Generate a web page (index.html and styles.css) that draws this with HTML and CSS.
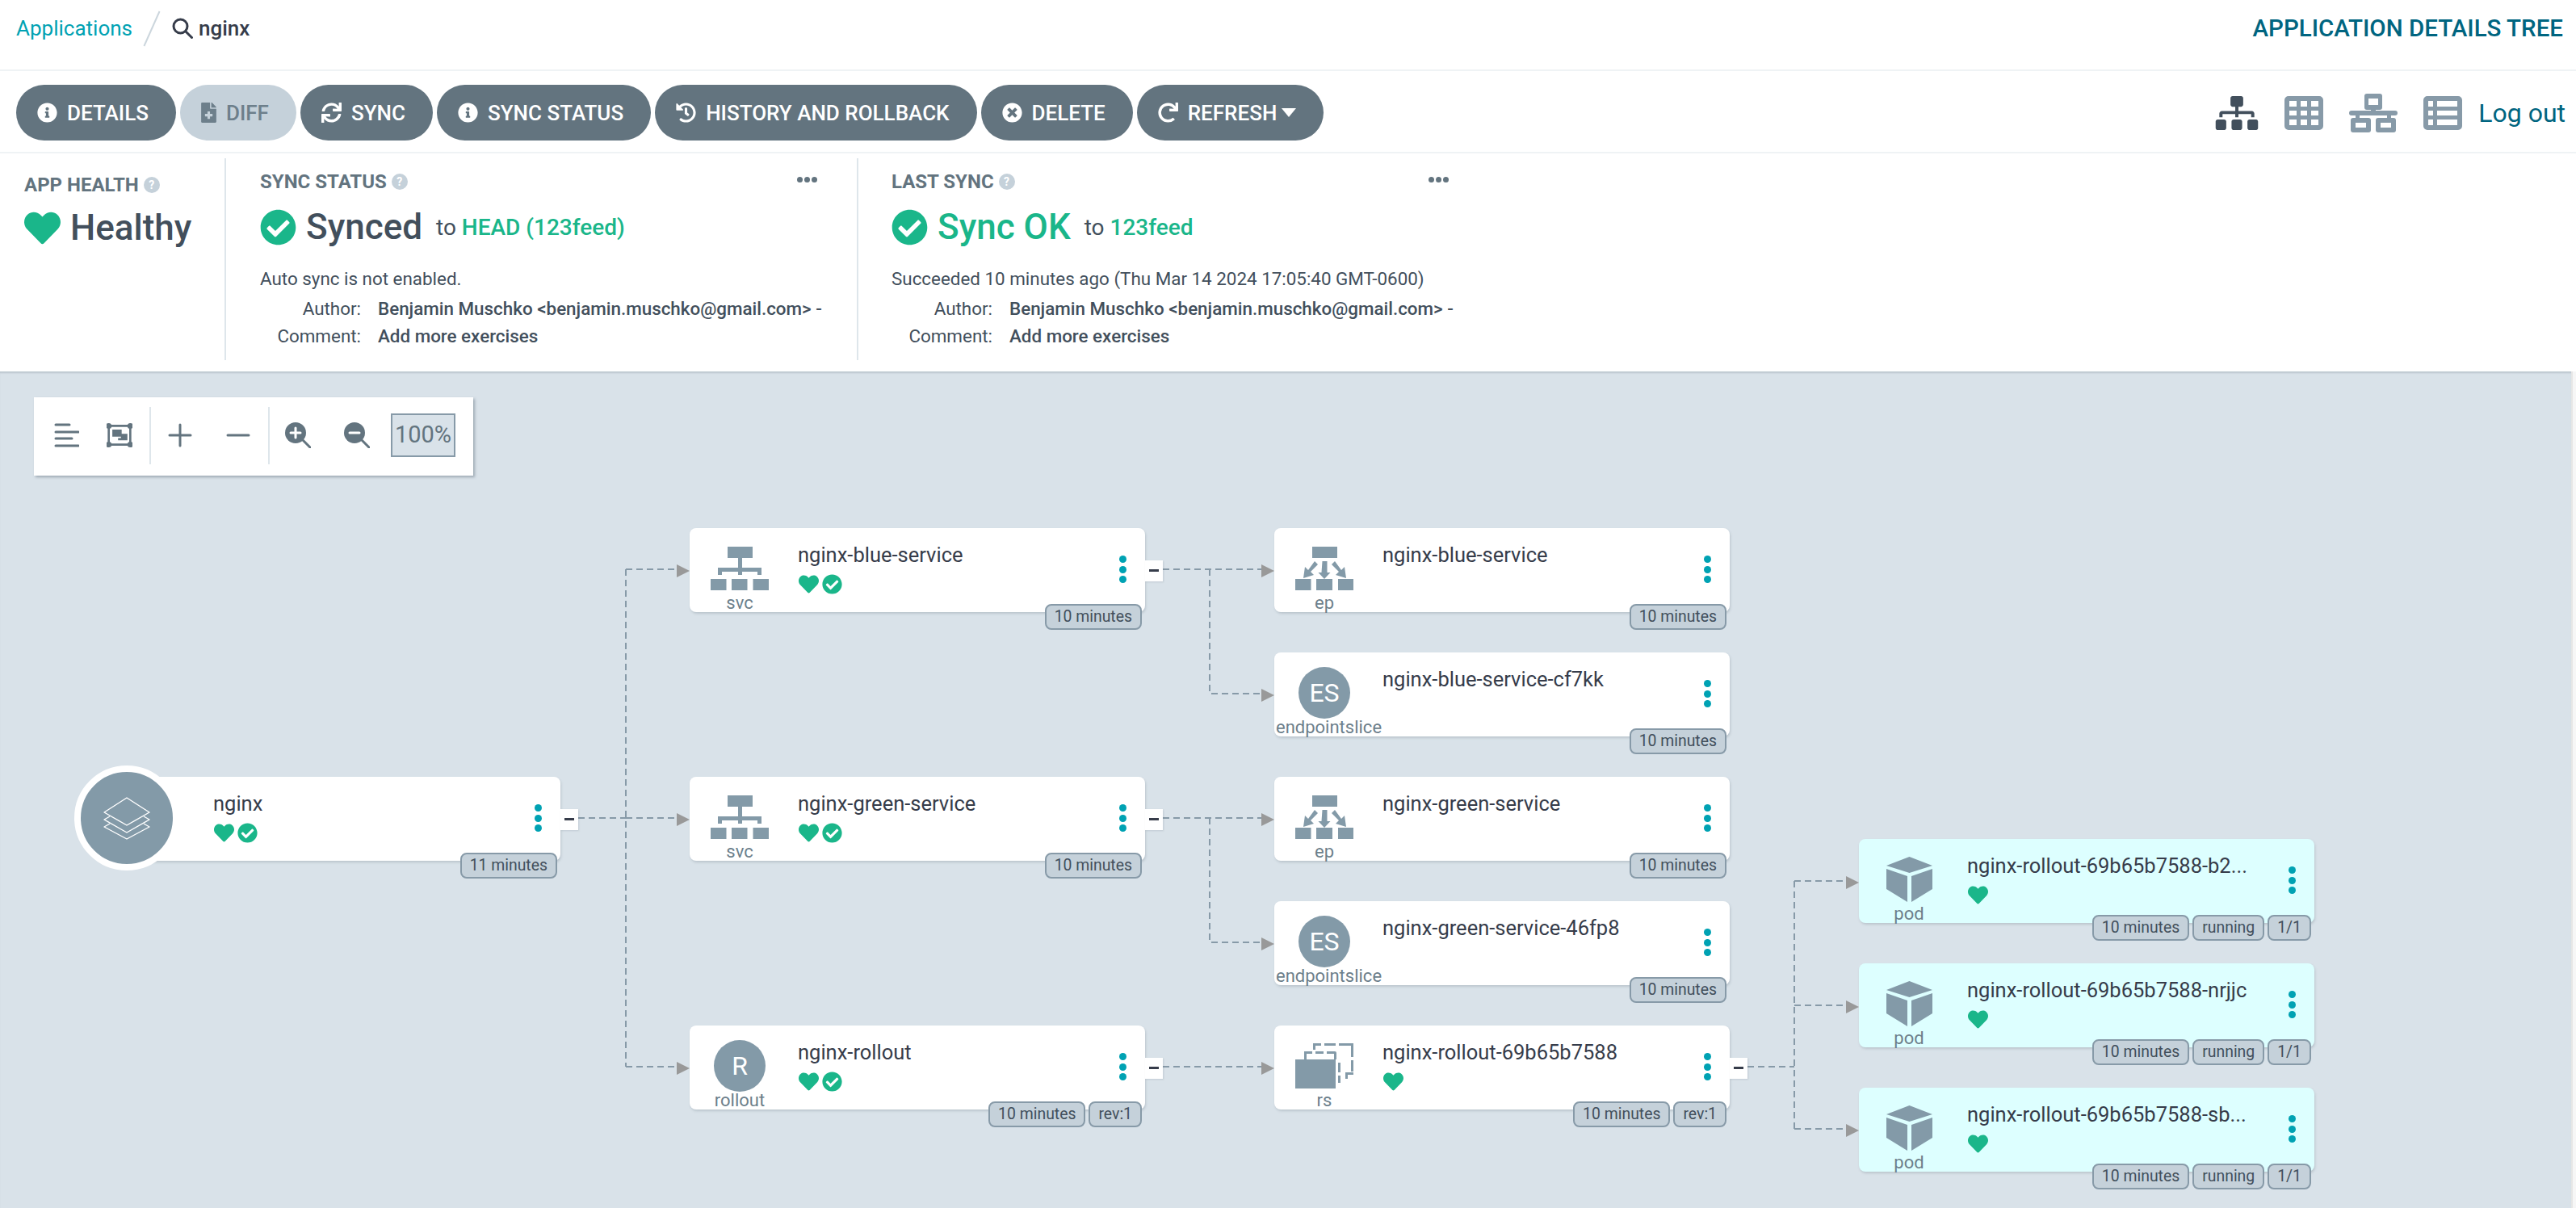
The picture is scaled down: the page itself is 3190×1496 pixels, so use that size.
FILE: index.html
```html
<!DOCTYPE html>
<html>
<head>
    <title>nginx - Application Details</title>
    <link rel="stylesheet" href="styles.css">
</head>
<body>
    <svg class="defs" xmlns="http://www.w3.org/2000/svg">
        <symbol id="i-heart" viewBox="0 0 512 512"><path d="M462.3 62.6C407.5 15.9 326 24.3 275.7 76.2L256 96.5l-19.7-20.3C186.1 24.3 104.5 15.9 49.7 62.6c-62.8 53.6-66.1 149.8-9.9 207.9l193.5 199.8c12.5 12.9 32.8 12.9 45.3 0l193.5-199.8c56.3-58.1 53-154.3-9.8-207.9z"/></symbol>
        <symbol id="i-check" viewBox="0 0 512 512"><path d="M504 256c0 136.967-111.033 248-248 248S8 392.967 8 256 119.033 8 256 8s248 111.033 248 248zM227.314 387.314l184-184c6.248-6.248 6.248-16.379 0-22.627l-22.627-22.627c-6.248-6.249-16.379-6.249-22.628 0L216 308.118l-70.059-70.059c-6.248-6.248-16.379-6.248-22.628 0l-22.627 22.627c-6.248 6.248-6.248 16.379 0 22.627l104 104c6.249 6.249 16.379 6.249 22.628.001z"/></symbol>
        <symbol id="i-info" viewBox="0 0 512 512"><path d="M256 8C119.043 8 8 119.083 8 256c0 136.997 111.043 248 248 248s248-111.003 248-248C504 119.083 392.957 8 256 8zm0 110c23.196 0 42 18.804 42 42s-18.804 42-42 42-42-18.804-42-42 18.804-42 42-42zm56 254c0 6.627-5.373 12-12 12h-88c-6.627 0-12-5.373-12-12v-24c0-6.627 5.373-12 12-12h12v-64h-12c-6.627 0-12-5.373-12-12v-24c0-6.627 5.373-12 12-12h64c6.627 0 12 5.373 12 12v100h12c6.627 0 12 5.373 12 12v24z"/></symbol>
        <symbol id="i-times" viewBox="0 0 512 512"><path d="M256 8C119 8 8 119 8 256s111 248 248 248 248-111 248-248S393 8 256 8zm121.6 313.1c4.7 4.7 4.7 12.3 0 17L338 377.6c-4.7 4.7-12.3 4.7-17 0L256 312l-65.1 65.6c-4.7 4.7-12.3 4.7-17 0L134.4 338c-4.7-4.7-4.7-12.3 0-17l65.6-65-65.6-65.1c-4.7-4.7-4.7-12.3 0-17l39.6-39.6c4.7-4.7 12.3-4.7 17 0l65 65.7 65.1-65.6c4.7-4.7 12.3-4.7 17 0l39.6 39.6c4.7 4.7 4.7 12.3 0 17L312 256l65.6 65.1z"/></symbol>
        <symbol id="i-sync" viewBox="0 0 512 512"><path d="M440.65 12.57l4 82.77A247.16 247.16 0 0 0 255.83 8C134.73 8 33.91 94.92 12.29 209.82A12 12 0 0 0 24.09 224h49.05a12 12 0 0 0 11.67-9.26 175.91 175.91 0 0 1 317-56.94l-101.46-4.86a12 12 0 0 0-12.57 12v47.41a12 12 0 0 0 12 12H500a12 12 0 0 0 12-12V12a12 12 0 0 0-12-12h-47.37a12 12 0 0 0-11.98 12.57zM255.83 432a175.61 175.61 0 0 1-146-77.8l101.8 4.87a12 12 0 0 0 12.57-12v-47.4a12 12 0 0 0-12-12H12a12 12 0 0 0-12 12V500a12 12 0 0 0 12 12h47.35a12 12 0 0 0 12-12.6l-4.15-82.57A247.17 247.17 0 0 0 255.83 504c121.11 0 221.93-86.92 243.55-201.82a12 12 0 0 0-11.8-14.18h-49.05a12 12 0 0 0-11.67 9.26A175.86 175.86 0 0 1 255.83 432z"/></symbol>
        <symbol id="i-redo" viewBox="0 0 512 512"><path d="M500.33 0h-47.41a12 12 0 0 0-12 12.57l4 82.76A247.42 247.42 0 0 0 256 8C119.34 8 7.9 119.53 8 256.19 8.1 393.07 119.1 504 256 504a247.1 247.1 0 0 0 166.18-63.91 12 12 0 0 0 .48-17.43l-34-34a12 12 0 0 0-16.38-.55A176 176 0 1 1 402.1 157.8l-101.53-4.87a12 12 0 0 0-12.57 12v47.41a12 12 0 0 0 12 12h200.33a12 12 0 0 0 12-12V12a12 12 0 0 0-12-12z"/></symbol>
        <symbol id="i-history" viewBox="0 0 512 512"><path d="M504 255.531c.253 136.64-111.18 248.372-247.82 248.468-59.015.042-113.223-20.53-155.822-54.911-11.077-8.94-11.905-25.541-1.839-35.607l11.267-11.267c8.609-8.609 22.353-9.551 31.891-1.984C173.062 425.135 212.781 440 256 440c101.705 0 184-82.311 184-184 0-101.705-82.311-184-184-184-48.814 0-93.149 18.969-126.068 49.932l50.754 50.754c10.08 10.08 2.941 27.314-11.313 27.314H24c-8.837 0-16-7.163-16-16V38.627c0-14.254 17.234-21.393 27.314-11.314l49.372 49.372C129.209 34.136 189.552 8 256 8c136.81 0 247.747 110.78 248 247.531zm-180.912 78.784l9.823-12.63c8.138-10.463 6.253-25.542-4.21-33.679L288 256.349V152c0-13.255-10.745-24-24-24h-16c-13.255 0-24 10.745-24 24v135.651l65.409 50.874c10.463 8.137 25.541 6.253 33.679-4.21z"/></symbol>
        <symbol id="i-file" viewBox="0 0 384 512"><path d="M377 105L279.1 7c-4.5-4.5-10.6-7-17-7H256v128h128v-6.1c0-6.3-2.5-12.4-7-16.9zm-153 31V0H24C10.7 0 0 10.7 0 24v464c0 13.3 10.7 24 24 24h336c13.3 0 24-10.7 24-24V160H248c-13.2 0-24-10.8-24-24zm64 160v48c0 4.4-3.6 8-8 8h-56v56c0 4.4-3.6 8-8 8h-48c-4.4 0-8-3.6-8-8v-56h-56c-4.4 0-8-3.6-8-8v-48c0-4.4 3.6-8 8-8h56v-56c0-4.4 3.6-8 8-8h48c4.4 0 8 3.6 8 8v56h56c4.4 0 8 3.6 8 8z"/></symbol>
        <symbol id="i-sitemap" viewBox="0 0 640 512"><path d="M128 352H32c-17.67 0-32 14.33-32 32v96c0 17.67 14.33 32 32 32h96c17.67 0 32-14.33 32-32v-96c0-17.67-14.33-32-32-32zm-24-80h192v48h48v-48h192v48h48v-57.59c0-21.17-17.23-38.41-38.41-38.41H344v-64h40c17.67 0 32-14.33 32-32V32c0-17.67-14.33-32-32-32H256c-17.67 0-32 14.33-32 32v96c0 17.67 14.33 32 32 32h40v64H94.41C73.23 224 56 241.23 56 262.41V320h48v-48zm264 80h-96c-17.67 0-32 14.33-32 32v96c0 17.67 14.33 32 32 32h96c17.67 0 32-14.33 32-32v-96c0-17.67-14.33-32-32-32zm240 0h-96c-17.67 0-32 14.33-32 32v96c0 17.67 14.33 32 32 32h96c17.67 0 32-14.33 32-32v-96c0-17.67-14.33-32-32-32z"/></symbol>
        <symbol id="i-grid" viewBox="0 0 48 42"><path fill-rule="evenodd" d="M5 0h38a5 5 0 0 1 5 5v32a5 5 0 0 1-5 5H5a5 5 0 0 1-5-5V5a5 5 0 0 1 5-5zM6 6v7h9V6zm14 0v7h8V6zm13 0v7h9V6zM6 18v6h9v-6zm14 0v6h8v-6zm13 0v6h9v-6zM6 29v7h9v-7zm14 0v7h8v-7zm13 0v7h9v-7z"/></symbol>
        <symbol id="i-list" viewBox="0 0 48 42"><path fill-rule="evenodd" d="M5 0h38a5 5 0 0 1 5 5v32a5 5 0 0 1-5 5H5a5 5 0 0 1-5-5V5a5 5 0 0 1 5-5zM6 6v7h6V6zm11 0v7h25V6zM6 18v6h6v-6zm11 0v6h25v-6zM6 29v7h6v-7zm11 0v7h25v-7z"/></symbol>
        <symbol id="i-network" viewBox="0 0 60 48"><path fill-rule="evenodd" d="M22 0h16a3 3 0 0 1 3 3v14a3 3 0 0 1-3 3h-5v1h24a3 3 0 0 1 0 6H52v3h3a3 3 0 0 1 3 3v12a3 3 0 0 1-3 3H36a3 3 0 0 1-3-3V33a3 3 0 0 1 3-3h11v-3H13v3h11a3 3 0 0 1 3 3v12a3 3 0 0 1-3 3H5a3 3 0 0 1-3-3V33a3 3 0 0 1 3-3h3v-3H3a3 3 0 0 1 0-6h24v-1h-5a3 3 0 0 1-3-3V3a3 3 0 0 1 3-3zm2 6v8h12V6zM8 36v6h13v-6zm31 0v6h13v-6z"/></symbol>
        <symbol id="i-service" viewBox="0 0 72 54"><path d="M21 0h31v14H21zM34 14h5v12h24v9h-5v-4H39v4h-5v-4H14v4H9v-9h25zM0 40h19.500v14H0zM26 40h19.500v14H26zM52.500 40H72v14H52.500z"/></symbol>
        <symbol id="i-endpoint" viewBox="0 0 72 54"><path d="M21 0h31v14H21zM0 40h19.500v14H0zM26 40h20v14H26zM53 40h19v14H53zM33.500 18h6v14h4l-7.500 8-7.500-8h4zM24 18l4 4-9 9 4 4-13 4 2-14 4 4zM49 18l-4 4 9 9-4 4 13 4-2-14-4 4z"/></symbol>
        <symbol id="i-replica" viewBox="0 0 72 56"><path d="M0 20h50v36H0zM11 10h10v3h-7v7h-3zM25 10h10v3H25zM39 10h10a2 2 0 0 1 2 2v8h-3v-7h-9zM53 24h3v12h-3zM53 40h3v9h-3zM22 0h10v3h-7v5h-3zM36 0h14v3H36zM54 0h18v3H54zM69 3h3v14h-3zM69 21h3v14h-3zM62 36h10v3h-7v5h-3z"/></symbol>
        <symbol id="i-cube" viewBox="0 0 57 56"><path d="M28.500 0 57 11 28.500 20 0 11zM0 15l26 9v32L0 40zM57 15l-26 9v32l26-16z"/></symbol>
        <symbol id="i-layers" viewBox="0 0 58 52"><g fill="none" stroke="#fff" stroke-width="1.400" stroke-linejoin="round"><path d="M29 35 1 19 29 1l28 18z"/><path d="M8 24 1 28l28 16 28-16-7-4"/><path d="M8 33 1 37l28 15 28-15-7-4"/></g></symbol>
    </svg>

    <header class="top-bar">
        <div class="crumbs">
            <a class="crumb-link">Applications</a>
            <span class="crumb-slash"></span>
            <svg class="crumb-search" viewBox="0 0 26 26"><circle cx="10.500" cy="10.500" r="8.500"/><path d="M17 17l7.500 7.500"/></svg>
            <span class="crumb-name">nginx</span>
        </div>
        <div class="page-title">APPLICATION DETAILS TREE</div>
    </header>

    <nav class="action-bar">
        <div class="actions">
            <a class="btn"><svg class="btn-icon"><use href="#i-info"/></svg>DETAILS</a>
            <a class="btn btn-disabled"><svg class="btn-icon btn-icon-file"><use href="#i-file"/></svg>DIFF</a>
            <a class="btn"><svg class="btn-icon"><use href="#i-sync"/></svg>SYNC</a>
            <a class="btn"><svg class="btn-icon"><use href="#i-info"/></svg>SYNC STATUS</a>
            <a class="btn"><svg class="btn-icon"><use href="#i-history"/></svg>HISTORY AND ROLLBACK</a>
            <a class="btn"><svg class="btn-icon"><use href="#i-times"/></svg>DELETE</a>
            <a class="btn"><svg class="btn-icon"><use href="#i-redo"/></svg>REFRESH<span class="caret"></span></a>
        </div>
        <div class="views">
            <svg class="view-tree"><use href="#i-sitemap"/></svg>
            <svg class="view-grid"><use href="#i-grid"/></svg>
            <svg class="view-network"><use href="#i-network"/></svg>
            <svg class="view-grid"><use href="#i-list"/></svg>
            <a class="logout">Log out</a>
        </div>
    </nav>

    <section class="status-panel">
        <div class="status-item status-health">
            <div class="status-head">APP HEALTH <span class="help">?</span></div>
            <div class="status-main">
                <svg class="health-big"><use href="#i-heart"/></svg>
                <span class="status-word">Healthy</span>
            </div>
        </div>
        <div class="status-item status-sync">
            <div class="status-head">SYNC STATUS <span class="help">?</span><span class="more"><i></i><i></i><i></i></span></div>
            <div class="status-main">
                <svg class="check-big"><use href="#i-check"/></svg>
                <span class="status-word">Synced</span>
                <span class="status-to">to <b class="green">HEAD (123feed)</b></span>
            </div>
            <div class="status-line">Auto sync is not enabled.</div>
            <dl class="meta">
                <dt>Author:</dt><dd>Benjamin Muschko &lt;benjamin.muschko@gmail.com&gt; -</dd>
                <dt>Comment:</dt><dd>Add more exercises</dd>
            </dl>
        </div>
        <div class="status-item status-last">
            <div class="status-head">LAST SYNC <span class="help">?</span><span class="more"><i></i><i></i><i></i></span></div>
            <div class="status-main">
                <svg class="check-big"><use href="#i-check"/></svg>
                <span class="status-word green">Sync OK</span>
                <span class="status-to">to <b class="green">123feed</b></span>
            </div>
            <div class="status-line">Succeeded 10 minutes ago (Thu Mar 14 2024 17:05:40 GMT-0600)</div>
            <dl class="meta">
                <dt>Author:</dt><dd>Benjamin Muschko &lt;benjamin.muschko@gmail.com&gt; -</dd>
                <dt>Comment:</dt><dd>Add more exercises</dd>
            </dl>
        </div>
    </section>

    <div class="graph-row">
    <main class="canvas">
        <div class="filters">
            <div class="filter-group filter-view">
                <svg class="tool" viewBox="0 0 32 32"><path d="M3 3h17M3 12h28M3 20h20M3 29h28"/></svg>
                <svg class="tool" viewBox="0 0 36 32"><path d="M3 3h30v26H3z"/><circle cx="3" cy="3" r="2.500"/><circle cx="33" cy="3" r="2.500"/><circle cx="3" cy="29" r="2.500"/><circle cx="33" cy="29" r="2.500"/><path class="tool-fill" d="M8 8h13v10H8zM20 14h9v9H16v-3h4z"/></svg>
            </div>
            <div class="filter-group">
                <svg class="tool" viewBox="0 0 32 32"><path d="M3 16h26M16 3v26"/></svg>
                <svg class="tool" viewBox="0 0 32 32"><path d="M3 16h26"/></svg>
            </div>
            <div class="filter-group filter-zoom">
                <svg class="tool" viewBox="0 0 32 32"><circle class="tool-fill" cx="13" cy="13" r="13"/><path d="M21 21l10 10"/><path class="tool-cut" d="M7 13h12M13 7v12"/></svg>
                <svg class="tool" viewBox="0 0 32 32"><circle class="tool-fill" cx="13" cy="13" r="13"/><path d="M21 21l10 10"/><path class="tool-cut" d="M7 13h12"/></svg>
                <span class="zoom-value">100%</span>
            </div>
        </div>

        <svg class="edges" xmlns="http://www.w3.org/2000/svg">
            <g class="edge-lines">
                <path d="M716 553H775M775 245V861M775 245H846M775 553H846M775 861H846"/>
                <path d="M1440 245H1570M1498 245V399H1570"/>
                <path d="M1440 553H1570M1498 553V707H1570"/>
                <path d="M1440 861H1570"/>
                <path d="M2164 861H2222M2222 631V938M2222 631H2294M2222 785H2294M2222 938H2294"/>
            </g>
            <g class="edge-heads">
                <path d="M838 239l16 8-16 8z"/><path d="M838 547l16 8-16 8z"/><path d="M838 855l16 8-16 8z"/>
                <path d="M1562 239l16 8-16 8z"/><path d="M1562 393l16 8-16 8z"/><path d="M1562 547l16 8-16 8z"/><path d="M1562 701l16 8-16 8z"/><path d="M1562 855l16 8-16 8z"/>
                <path d="M2286 625l16 8-16 8z"/><path d="M2286 779l16 8-16 8z"/><path d="M2286 932l16 8-16 8z"/>
            </g>
        </svg>

        <div class="node node-app">
            <div class="app-circle"><svg class="layers"><use href="#i-layers"/></svg></div>
            <div class="node-name">nginx</div>
            <div class="node-status"><svg class="mini-heart"><use href="#i-heart"/></svg><svg class="mini-check"><use href="#i-check"/></svg></div>
            <div class="node-dots"><i></i><i></i><i></i></div>
            <div class="node-toggle"></div>
            <div class="node-tags"><span class="tag">11 minutes</span></div>
        </div>

        <div class="node node-blue-svc">
            <div class="kind-icon"><svg class="kind-svg"><use href="#i-service"/></svg></div>
            <div class="kind-label">svc</div>
            <div class="node-name">nginx-blue-service</div>
            <div class="node-status"><svg class="mini-heart"><use href="#i-heart"/></svg><svg class="mini-check"><use href="#i-check"/></svg></div>
            <div class="node-dots"><i></i><i></i><i></i></div>
            <div class="node-toggle"></div>
            <div class="node-tags"><span class="tag">10 minutes</span></div>
        </div>

        <div class="node node-blue-ep">
            <div class="kind-icon"><svg class="kind-svg"><use href="#i-endpoint"/></svg></div>
            <div class="kind-label">ep</div>
            <div class="node-name">nginx-blue-service</div>
            <div class="node-dots"><i></i><i></i><i></i></div>
            <div class="node-tags"><span class="tag">10 minutes</span></div>
        </div>

        <div class="node node-blue-es">
            <div class="kind-icon"><span class="kind-circle">ES</span></div>
            <div class="kind-label">endpointslice</div>
            <div class="node-name">nginx-blue-service-cf7kk</div>
            <div class="node-dots"><i></i><i></i><i></i></div>
            <div class="node-tags"><span class="tag">10 minutes</span></div>
        </div>

        <div class="node node-green-svc">
            <div class="kind-icon"><svg class="kind-svg"><use href="#i-service"/></svg></div>
            <div class="kind-label">svc</div>
            <div class="node-name">nginx-green-service</div>
            <div class="node-status"><svg class="mini-heart"><use href="#i-heart"/></svg><svg class="mini-check"><use href="#i-check"/></svg></div>
            <div class="node-dots"><i></i><i></i><i></i></div>
            <div class="node-toggle"></div>
            <div class="node-tags"><span class="tag">10 minutes</span></div>
        </div>

        <div class="node node-green-ep">
            <div class="kind-icon"><svg class="kind-svg"><use href="#i-endpoint"/></svg></div>
            <div class="kind-label">ep</div>
            <div class="node-name">nginx-green-service</div>
            <div class="node-dots"><i></i><i></i><i></i></div>
            <div class="node-tags"><span class="tag">10 minutes</span></div>
        </div>

        <div class="node node-green-es">
            <div class="kind-icon"><span class="kind-circle">ES</span></div>
            <div class="kind-label">endpointslice</div>
            <div class="node-name">nginx-green-service-46fp8</div>
            <div class="node-dots"><i></i><i></i><i></i></div>
            <div class="node-tags"><span class="tag">10 minutes</span></div>
        </div>

        <div class="node node-rollout">
            <div class="kind-icon"><span class="kind-circle">R</span></div>
            <div class="kind-label">rollout</div>
            <div class="node-name">nginx-rollout</div>
            <div class="node-status"><svg class="mini-heart"><use href="#i-heart"/></svg><svg class="mini-check"><use href="#i-check"/></svg></div>
            <div class="node-dots"><i></i><i></i><i></i></div>
            <div class="node-toggle"></div>
            <div class="node-tags"><span class="tag">10 minutes</span><span class="tag">rev:1</span></div>
        </div>

        <div class="node node-rs">
            <div class="kind-icon"><svg class="kind-svg"><use href="#i-replica"/></svg></div>
            <div class="kind-label">rs</div>
            <div class="node-name">nginx-rollout-69b65b7588</div>
            <div class="node-status"><svg class="mini-heart"><use href="#i-heart"/></svg></div>
            <div class="node-dots"><i></i><i></i><i></i></div>
            <div class="node-toggle"></div>
            <div class="node-tags"><span class="tag">10 minutes</span><span class="tag">rev:1</span></div>
        </div>

        <div class="node node-pod node-pod-1">
            <div class="kind-icon"><svg class="kind-cube"><use href="#i-cube"/></svg></div>
            <div class="kind-label">pod</div>
            <div class="node-name">nginx-rollout-69b65b7588-b2...</div>
            <div class="node-status"><svg class="mini-heart"><use href="#i-heart"/></svg></div>
            <div class="node-dots"><i></i><i></i><i></i></div>
            <div class="node-tags"><span class="tag">10 minutes</span><span class="tag">running</span><span class="tag">1/1</span></div>
        </div>

        <div class="node node-pod node-pod-2">
            <div class="kind-icon"><svg class="kind-cube"><use href="#i-cube"/></svg></div>
            <div class="kind-label">pod</div>
            <div class="node-name">nginx-rollout-69b65b7588-nrjjc</div>
            <div class="node-status"><svg class="mini-heart"><use href="#i-heart"/></svg></div>
            <div class="node-dots"><i></i><i></i><i></i></div>
            <div class="node-tags"><span class="tag">10 minutes</span><span class="tag">running</span><span class="tag">1/1</span></div>
        </div>

        <div class="node node-pod node-pod-3">
            <div class="kind-icon"><svg class="kind-cube"><use href="#i-cube"/></svg></div>
            <div class="kind-label">pod</div>
            <div class="node-name">nginx-rollout-69b65b7588-sb...</div>
            <div class="node-status"><svg class="mini-heart"><use href="#i-heart"/></svg></div>
            <div class="node-dots"><i></i><i></i><i></i></div>
            <div class="node-tags"><span class="tag">10 minutes</span><span class="tag">running</span><span class="tag">1/1</span></div>
        </div>
    </main>
    <div class="scroll-track"></div>
    </div>
</body>
</html>
```

FILE: styles.css
```css
* {
    box-sizing: border-box;
}
html, body {
    height: 100%;
}
body {
    margin: 0;
    font-family: Roboto, "Liberation Sans", sans-serif;
    color: #363c4a;
    background: #fff;
    display: flex;
    flex-direction: column;
    overflow: hidden;
}
.defs {
    position: absolute;
    width: 0;
    height: 0;
}
svg {
    display: block;
    fill: currentColor;
}
a {
    text-decoration: none;
}

/* top bar */
.top-bar {
    height: 88px;
    flex: none;
    display: flex;
    justify-content: space-between;
    align-items: flex-start;
    padding: 0 16px 0 20px;
    border-bottom: 2px solid #eff3f5;
}
.crumbs {
    display: flex;
    align-items: center;
    height: 70px;
}
.crumb-link {
    font-size: 26px;
    color: #00a2b3;
}
.crumb-slash {
    width: 2px;
    height: 47px;
    margin: 0 24px 0 23px;
    background: #ccd6dd;
    transform: rotate(24deg);
}
.crumb-search {
    width: 26px;
    height: 26px;
    margin-right: 7px;
    fill: none;
    stroke: #363c4a;
    stroke-width: 3;
    stroke-linecap: round;
}
.crumb-name {
    font-size: 26px;
    font-weight: 500;
}
.page-title {
    font-size: 29.500px;
    font-weight: 500;
    line-height: 70px;
    color: #006580;
}

/* action bar */
.action-bar {
    height: 102px;
    flex: none;
    display: flex;
    justify-content: space-between;
    align-items: center;
    padding: 3px 13px 0 20px;
    border-bottom: 2px solid #eff3f5;
}
.actions {
    display: flex;
    gap: 5px;
}
.btn {
    height: 69px;
    display: flex;
    align-items: center;
    gap: 12px;
    padding: 0 34px 0 26px;
    border-radius: 35px;
    background: #63747f;
    color: #fff;
    font-size: 26px;
    font-weight: 500;
}
.btn-disabled {
    background: #c5d1da;
    color: #6d7f8b;
}
.btn-icon {
    width: 25px;
    height: 25px;
}
.btn-icon-file {
    width: 19px;
}
.caret {
    width: 0;
    height: 0;
    margin-left: -6px;
    border: 9px solid transparent;
    border-top: 11px solid #fff;
    border-bottom: 0;
}
.views {
    display: flex;
    align-items: center;
    gap: 32px;
    color: #879aa8;
}
.view-tree {
    width: 54px;
    height: 42px;
    color: #424f5c;
}
.view-grid {
    width: 48px;
    height: 42px;
}
.view-network {
    width: 60px;
    height: 48px;
}
.logout {
    font-size: 32px;
    color: #006580;
    margin-left: -12px;
}

/* status panel */
.status-panel {
    height: 270px;
    flex: none;
    display: flex;
    padding-top: 6px;
}
.status-item {
    height: 250px;
    padding-left: 42px;
}
.status-health {
    width: 280px;
    padding-left: 30px;
    border-right: 2px solid #dee6eb;
}
.status-sync {
    width: 783px;
    border-right: 2px solid #dee6eb;
}
.status-last {
    padding-left: 41px;
    width: 730px;
}
.status-head {
    display: flex;
    align-items: center;
    gap: 6px;
    width: 690px;
    height: 26px;
    margin-top: 16px;
    font-size: 24px;
    font-weight: 700;
    color: #63747f;
    position: relative;
}
.status-health .status-head {
    width: auto;
    margin-top: 20px;
}
.help {
    width: 20px;
    height: 20px;
    border-radius: 50%;
    background: #c5d1da;
    color: #fff;
    font-size: 14px;
    font-weight: 700;
    text-align: center;
    line-height: 20px;
}
.more {
    position: absolute;
    right: 0;
    top: 7px;
    display: flex;
    gap: 2px;
}
.more i {
    width: 7px;
    height: 7px;
    border-radius: 50%;
    background: #63747f;
}
.status-main {
    display: flex;
    align-items: center;
    height: 46px;
    margin-top: 20px;
    gap: 12px;
}
.status-health .status-main {
    margin-top: 17px;
    gap: 12px;
}
.status-word {
    font-size: 44px;
    font-weight: 500;
    color: #424f5c;
}
.green,
.status-word.green {
    color: #1ab68a;
}
.status-to {
    margin-left: 5px;
    font-size: 28px;
    color: #424f5c;
}
.status-to b {
    font-weight: 500;
}
.health-big {
    width: 45px;
    height: 45px;
    color: #1ab68a;
}
.check-big {
    width: 45px;
    height: 45px;
    color: #1ab68a;
}
.status-line {
    margin-top: 28px;
    font-size: 22.400px;
    line-height: 26px;
    color: #424f5c;
}
.meta {
    display: grid;
    grid-template-columns: 125px auto;
    column-gap: 21px;
    row-gap: 8px;
    margin: 11px 0 0;
    font-size: 22.400px;
    line-height: 26px;
    color: #424f5c;
}
.meta dt {
    text-align: right;
}
.meta dd {
    margin: 0;
    font-weight: 500;
    white-space: nowrap;
}

/* graph */
.graph-row {
    flex: 1;
    display: flex;
}
.canvas {
    flex: 1;
    position: relative;
    background: #d9e2e9;
    box-shadow: inset 0 3px 2px -1px rgba(99, 116, 127, 0.25);
}
.scroll-track {
    width: 6px;
    flex: none;
    background: #f6f6f6;
    border-left: 2px solid #e6e6e6;
}
.filters {
    position: absolute;
    left: 42px;
    top: 32px;
    width: 544px;
    height: 97px;
    padding-bottom: 3px;
    display: flex;
    align-items: center;
    background: #fff;
    box-shadow: 2px 2px 3px rgba(99, 116, 127, 0.5);
}
.filter-group {
    height: 71px;
    display: flex;
    align-items: center;
    gap: 40px;
    padding: 0 21px 0 20px;
    border-right: 2px solid #dee6eb;
}
.filter-view {
    padding-left: 24px;
    gap: 34px;
}
.filter-zoom {
    padding-left: 19px;
    border-right: 0;
    gap: 41px;
}
.tool {
    width: 32px;
    height: 32px;
    fill: none;
    stroke: #63747f;
    stroke-width: 3;
    stroke-linecap: round;
}
.tool .tool-fill {
    fill: #63747f;
    stroke: none;
}
.tool .tool-cut {
    stroke: #fff;
}
.zoom-value {
    width: 80px;
    height: 54px;
    margin-left: -15px;
    border: 2px solid #879aa8;
    background: #d9e2e9;
    font-size: 29px;
    line-height: 48px;
    text-align: center;
    color: #63747f;
}
.edges {
    position: absolute;
    left: 0;
    top: 0;
    width: 100%;
    height: 100%;
}
.edge-lines {
    fill: none;
    stroke: #879aa8;
    stroke-width: 2;
    stroke-dasharray: 8 5;
}
.edge-heads {
    fill: #999;
}

.node {
    position: absolute;
    width: 564px;
    height: 104px;
    border-radius: 8px;
    background: #fff;
    box-shadow: 1px 2px 3px rgba(99, 116, 127, 0.25);
}
.node-pod {
    background: #ddffff;
}
.node-app { left: 130px; top: 502px; border-radius: 0 8px 8px 0; }
.node-blue-svc { left: 854px; top: 194px; }
.node-blue-ep { left: 1578px; top: 194px; }
.node-blue-es { left: 1578px; top: 348px; }
.node-green-svc { left: 854px; top: 502px; }
.node-green-ep { left: 1578px; top: 502px; }
.node-green-es { left: 1578px; top: 656px; }
.node-rollout { left: 854px; top: 810px; }
.node-rs { left: 1578px; top: 810px; }
.node-pod-1 { left: 2302px; top: 579px; }
.node-pod-2 { left: 2302px; top: 733px; }
.node-pod-3 { left: 2302px; top: 887px; }

.app-circle {
    position: absolute;
    left: -38px;
    top: -14px;
    width: 130px;
    height: 130px;
    border: 8px solid #fff;
    border-radius: 50%;
    background: #839aa8;
    display: flex;
    align-items: center;
    justify-content: center;
}
.layers {
    width: 58px;
    height: 54px;
}
.kind-icon {
    position: absolute;
    left: 2px;
    top: 18px;
    width: 120px;
    height: 64px;
    display: flex;
    align-items: center;
    justify-content: center;
    color: #839aa8;
}
.kind-svg {
    width: 72px;
    height: 56px;
}
.kind-cube {
    width: 57px;
    height: 56px;
}
.kind-circle {
    width: 64px;
    height: 64px;
    border-radius: 50%;
    background: #839aa8;
    color: #fff;
    font-size: 32px;
    line-height: 64px;
    text-align: center;
}
.kind-label {
    position: absolute;
    left: 2px;
    top: 80px;
    width: 120px;
    font-size: 22px;
    line-height: 26px;
    text-align: center;
    color: #6d7f8b;
    white-space: nowrap;
}
.node-name {
    position: absolute;
    left: 134px;
    top: 16px;
    font-size: 25.500px;
    line-height: 34px;
    color: #363c4a;
    white-space: nowrap;
}
.node-status {
    position: absolute;
    left: 135px;
    top: 57px;
    display: flex;
    align-items: center;
    gap: 4px;
    color: #1ab68a;
}
.mini-heart {
    width: 25px;
    height: 25px;
}
.mini-check {
    width: 25px;
    height: 25px;
}
.node-dots {
    position: absolute;
    left: 532px;
    top: 34px;
    display: flex;
    flex-direction: column;
    gap: 3.500px;
}
.node-dots i {
    width: 9px;
    height: 9px;
    border-radius: 50%;
    background: #00a2b3;
}
.node-toggle {
    position: absolute;
    left: 564px;
    top: 40px;
    width: 22px;
    height: 26px;
    background: #fff;
    box-shadow: 1px 1px 2px rgba(99, 116, 127, 0.2);
}
.node-toggle::after {
    content: "";
    position: absolute;
    left: 5px;
    top: 11px;
    width: 12px;
    height: 3px;
    background: #363c4a;
}
.node-tags {
    position: absolute;
    right: 4px;
    bottom: -22px;
    display: flex;
    gap: 4px;
}
.tag {
    height: 32px;
    padding: 0 10px;
    border: 2px solid #879aa8;
    border-radius: 8px;
    background: #c5d1da;
    font-size: 19.400px;
    line-height: 28px;
    color: #424f5c;
}
```
